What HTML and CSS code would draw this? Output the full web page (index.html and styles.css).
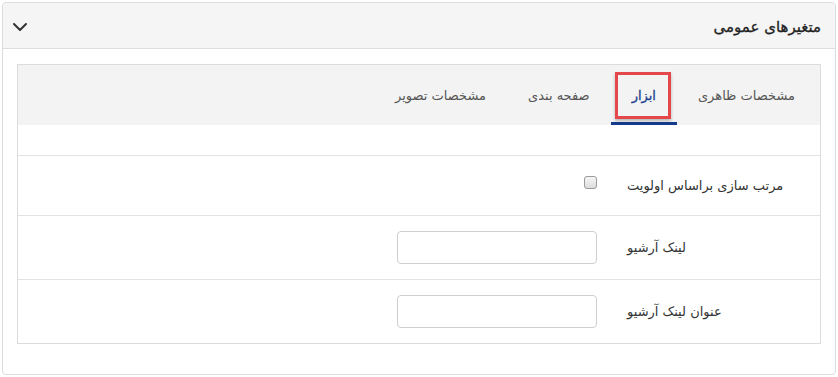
FILE: index.html
```html
<!DOCTYPE html>
<html lang="fa" dir="rtl">
<head>
<meta charset="utf-8">
<link rel="stylesheet" href="styles.css">
</head>
<body>
<div class="panel">
  <div class="panel-head">
    <span class="title">متغیرهای عمومی</span>
    <svg class="chev" width="14" height="8" viewBox="0 0 14 8"><path d="M1 1 L7 7 L13 1" fill="none" stroke="#333" stroke-width="2" stroke-linecap="round" stroke-linejoin="round"/></svg>
  </div>
  <div class="panel-body">
    <div class="box">
      <div class="tabs">
        <div class="tab">مشخصات ظاهری</div>
        <div class="tab active">ابزار<span class="mark"></span></div>
        <div class="tab">صفحه بندی</div>
        <div class="tab">مشخصات تصویر</div>
      </div>
      <div class="row empty"></div>
      <div class="row short">
        <div class="label">مرتب سازی براساس اولویت</div>
        <div class="ctrl top"><span class="check"></span></div>
      </div>
      <div class="row">
        <div class="label">لینک آرشیو</div>
        <div class="ctrl"><span class="input"></span></div>
      </div>
      <div class="row last">
        <div class="label">عنوان لینک آرشیو</div>
        <div class="ctrl"><span class="input"></span></div>
      </div>
    </div>
  </div>
</div>
</body>
</html>
```

FILE: styles.css
```css
* { box-sizing: border-box; }
html, body { background: #fff; }
body {
  margin: 2px;
  font-family: "DejaVu Sans", sans-serif;
  color: #333;
}
.panel {
  border: 1px solid #dcdcdc;
  border-radius: 4px;
  background: #fff;
  height: 373px;
}
.panel-head {
  height: 46px;
  background: #f5f5f5;
  border-bottom: 1px solid #dedede;
  display: flex;
  align-items: center;
  justify-content: space-between;
  padding: 0 14px 0 10px;
  border-radius: 4px 4px 0 0;
}
.title {
  font-size: 15px;
  font-weight: normal;
  color: #222;
  padding-top: 2px;
  -webkit-text-stroke: 0.3px #222;
}
.chev { display: block; margin-top: 2px; }
.panel-body {
  padding: 15px 14px 30px 14px;
}
.box {
  border: 1px solid #dcdcdc;
}
.tabs {
  height: 60px;
  background: #f3f3f3;
  display: flex;
  padding-right: 4px;
}
.tab {
  position: relative;
  height: 60px;
  padding: 0 21px;
  display: flex;
  align-items: center;
  font-size: 13px;
  color: #555;
}
.tab.active {
  color: #1c3f8e;
  -webkit-text-stroke: 0.3px #1c3f8e;
  border-bottom: 3px solid #143c8c;
  padding-top: 3px;
}
.mark {
  position: absolute;
  left: 4px;
  right: 6px;
  top: 7px;
  bottom: 3px;
  border: 3px solid #e5484b;
  box-shadow: 0 2px 3px rgba(0,0,0,0.25);
}
.row {
  height: 64px;
  border-top: 1px solid #e3e3e3;
  display: flex;
  align-items: center;
}
.row.empty { height: 30px; border-top: none; }
.row.short { height: 60px; }
.label {
  width: 208px;
  padding: 0 15px;
  text-align: left;
  font-size: 13px;
  color: #333;
}
.ctrl {
  padding-right: 15px;
  display: flex;
  align-items: center;
}
.ctrl.top { align-self: flex-start; padding-top: 20px; }
.check {
  display: block;
  width: 13px;
  height: 13px;
  border: 1px solid #9a9a9a;
  border-radius: 3px;
  background: linear-gradient(#f6f6f6, #dcdcdc);
}
.input {
  display: block;
  width: 200px;
  height: 33px;
  border: 1px solid #cfcfcf;
  border-radius: 4px;
  background: #fff;
}
```
